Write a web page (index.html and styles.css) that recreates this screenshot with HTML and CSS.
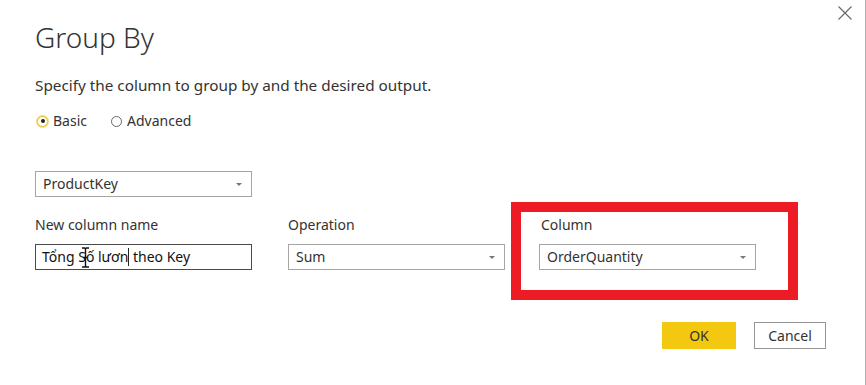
FILE: index.html
```html
<!DOCTYPE html>
<html>
<head>
	<meta charset="utf-8">
	<title>Group By</title>
	<link rel="stylesheet" href="styles.css">
</head>
<body>
	<div class="dialog">
		<button class="close" type="button">
			<svg width="14" height="14" viewBox="0 0 14 14"><path d="M0.5 0.5 L13.5 13.5 M13.5 0.5 L0.5 13.5" stroke="#6b6b6b" stroke-width="1.2" fill="none"/></svg>
		</button>

		<h1 class="title">Group By</h1>
		<p class="intro">Specify the column to group by and the desired output.</p>

		<div class="modes">
			<label class="radio checked"><span class="dot"></span>Basic</label>
			<label class="radio"><span class="dot"></span>Advanced</label>
		</div>

		<div class="select key">ProductKey<span class="arrow"></span></div>

		<div class="fields">
			<div class="field">
				<div class="label">New column name</div>
				<div class="input">Tổng S<span class="beam-wrap">ố<svg class="beam" width="9" height="21" viewBox="0 0 9 21"><path d="M1 1 H3.5 Q4.5 1 4.5 2.5 Q4.5 1 5.5 1 H8 M4.5 2.5 V18.5 M1 20 H3.5 Q4.5 20 4.5 18.5 Q4.5 20 5.5 20 H8 M2.5 10.5 H6.5" stroke="#111" stroke-width="1.4" fill="none"/></svg></span> lươn<span class="caret"></span> theo Key</div>
			</div>
			<div class="field">
				<div class="label">Operation</div>
				<div class="select">Sum<span class="arrow"></span></div>
			</div>
			<div class="field highlight">
				<div class="label">Column</div>
				<div class="select">OrderQuantity<span class="arrow"></span></div>
			</div>
		</div>

		<div class="actions">
			<button class="btn ok" type="button">OK</button>
			<button class="btn cancel" type="button">Cancel</button>
		</div>
	</div>
</body>
</html>
```

FILE: styles.css
```css
html, body {
	margin: 0;
	background: #ffffff;
}
body {
	font-family: "Noto Sans", "Open Sans", sans-serif;
	color: #252423;
}
.dialog {
	position: relative;
	width: 866px;
	height: 385px;
	border-right: 1px solid #b0b0b0;
	box-sizing: border-box;
	padding: 0 0 0 35px;
}
.close {
	position: absolute;
	top: 6px;
	right: 13px;
	border: none;
	background: none;
	padding: 0;
	line-height: 0;
}
.title {
	margin: 0;
	padding-top: 17px;
	font-size: 28px;
	font-weight: 300;
	line-height: 40px;
	color: #333;
}
.intro {
	margin: 18px 0 0;
	font-size: 15.3px;
	line-height: 20px;
	color: #333;
}
.modes {
	display: flex;
	gap: 24px;
	margin-top: 16px;
	font-size: 14px;
	line-height: 20px;
	color: #333;
}
.radio {
	display: flex;
	align-items: center;
	gap: 5px;
}
.dot {
	width: 9px;
	height: 9px;
	margin-left: 2px;
	border: 1px solid #666;
	border-radius: 50%;
	position: relative;
	background: #fff;
}
.radio + .radio .dot {
	margin-left: 0;
}
.radio.checked .dot {
	border-color: #e8c22b;
	box-shadow: 0 0 0 1px #f3dc7c;
}
.radio.checked .dot::after {
	content: "";
	position: absolute;
	left: 2.5px;
	top: 2.5px;
	width: 4px;
	height: 4px;
	border-radius: 50%;
	background: #222;
}
.select, .input {
	box-sizing: border-box;
	width: 217px;
	height: 26px;
	border: 1px solid #a6a6a6;
	padding: 0 0 0 7px;
	font-size: 14px;
	line-height: 24px;
	color: #333;
	position: relative;
	white-space: nowrap;
}
.select.key {
	margin-top: 40px;
}
.arrow {
	position: absolute;
	right: 9px;
	top: 11px;
	width: 0;
	height: 0;
	border-left: 3.5px solid transparent;
	border-right: 3.5px solid transparent;
	border-top: 3.5px solid #777;
}
.fields {
	display: flex;
	align-items: flex-start;
	margin-top: 18px;
	gap: 36px;
}
.field .label {
	font-size: 14px;
	line-height: 20px;
	color: #333;
	margin-bottom: 9px;
}
.input {
	border-color: #4a4a4a;
	color: #111;
	padding-left: 6px;
}
.beam-wrap {
	position: relative;
}
.beam {
	position: absolute;
	left: -5px;
	top: 0;
}
.caret {
	display: inline-block;
	width: 1px;
	height: 18px;
	background: #222;
	vertical-align: -4px;
}
.highlight {
	margin: -13px 0 0 -30px;
	padding: 3px 0 0 18px;
	width: 249px;
	height: 75px;
	border: 10px solid #ed1c24;
}
.highlight .label {
	padding-left: 2px;
}
.actions {
	display: flex;
	justify-content: flex-end;
	gap: 18px;
	margin: 22px 39px 0 0;
}
.btn {
	width: 74px;
	height: 27px;
	font-family: inherit;
	font-size: 14px;
	color: #333;
	padding: 0;
}
.ok {
	background: #f2c811;
	border: 1px solid #f2c811;
}
.cancel {
	width: 72px;
	background: #fff;
	border: 1px solid #959595;
}
```
